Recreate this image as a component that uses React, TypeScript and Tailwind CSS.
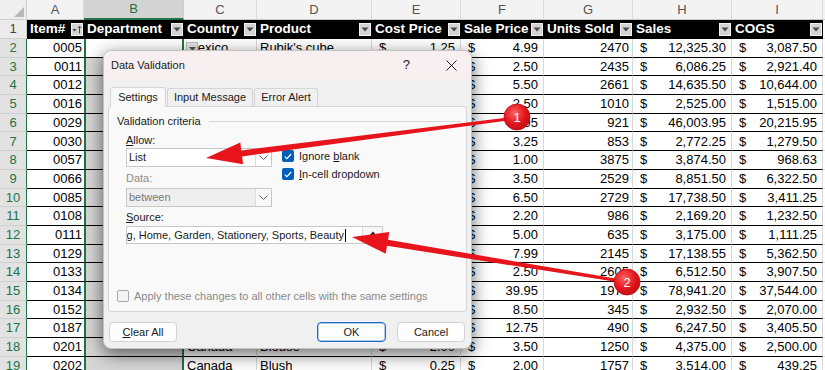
import React from "react";

const W = [
  "w-[27px]",
  "w-[57px]",
  "w-[100px]",
  "w-[73px]",
  "w-[115px]",
  "w-[89px]",
  "w-[83px]",
  "w-[89px]",
  "w-[99px]",
  "w-[91px]",
  "w-[30px]",
];
const LETTERS = ["", "A", "B", "C", "D", "E", "F", "G", "H", "I", "J"];
const HEADERS = ["Item#", "Department", "Country", "Product", "Cost Price", "Sale Price", "Units Sold", "Sales", "COGS"];

const DATA: string[][] = [
  ["0005", "Mexico", "Rubik's cube", "1.25", "4.99", "2470", "12,325.30", "3,087.50"],
  ["0011", "Canada", "Pencil case", "1.20", "2.50", "2435", "6,086.25", "2,921.40"],
  ["0012", "USA", "Garden hose", "4.00", "5.50", "2661", "14,635.50", "10,644.00"],
  ["0016", "Mexico", "Notebook", "1.50", "2.50", "1010", "2,525.00", "1,515.00"],
  ["0029", "USA", "Headphones", "21.95", "49.95", "921", "46,003.95", "20,215.95"],
  ["0030", "Canada", "Sticky notes", "1.50", "3.25", "853", "2,772.25", "1,279.50"],
  ["0057", "USA", "Eraser", "0.25", "1.00", "3875", "3,874.50", "968.63"],
  ["0066", "Mexico", "Plant pot", "2.50", "3.50", "2529", "8,851.50", "6,322.50"],
  ["0085", "Canada", "Socks", "1.25", "6.50", "2729", "17,738.50", "3,411.25"],
  ["0108", "USA", "Lip balm", "1.25", "2.20", "986", "2,169.20", "1,232.50"],
  ["0111", "Mexico", "Tennis balls", "1.75", "5.00", "635", "3,175.00", "1,111.25"],
  ["0129", "Canada", "T-shirt", "2.50", "7.99", "2145", "17,138.55", "5,362.50"],
  ["0133", "USA", "Candle", "1.50", "2.50", "2605", "6,512.50", "3,907.50"],
  ["0134", "Mexico", "Football", "19.00", "39.95", "1976", "78,941.20", "37,544.00"],
  ["0152", "Canada", "Trowel", "6.00", "8.50", "345", "2,932.50", "2,070.00"],
  ["0187", "USA", "Yoga mat", "6.95", "12.75", "490", "6,247.50", "3,405.50"],
  ["0201", "Canada", "Blouse", "2.00", "3.50", "1250", "4,375.00", "2,500.00"],
  ["0202", "Canada", "Blush", "0.25", "2.00", "1757", "3,514.00", "439.25"],
];

function FilterBtn({ sort }: { sort?: boolean }) {
  return (
    <span className="flex h-[13px] w-[12px] shrink-0 items-center justify-center border border-[#f0f0f0] bg-[#d4d4d4]">
      {sort ? (
        <svg width="10" height="11" viewBox="0 0 10 11">
          <path d="M0.5 5h4.2L2.6 7.6z" fill="#444" />
          <path d="M7.5 2.2v7.2M5.9 3.9 7.5 2.2l1.6 1.7" stroke="#444" strokeWidth="1" fill="none" />
        </svg>
      ) : (
        <svg width="8" height="5" viewBox="0 0 8 5">
          <path d="M0.5 0.5h7L4 4.5z" fill="#4a4a4a" />
        </svg>
      )}
    </span>
  );
}

function Acc({ w, v }: { w: string; v: string }) {
  return (
    <div
      className={`${w} flex shrink-0 items-center justify-between whitespace-nowrap border-b border-r border-b-black border-r-[#d8d8d8] bg-white pl-[7px] pr-[5px]`}
    >
      <span>$</span>
      <span>{v}</span>
    </div>
  );
}

function Sheet() {
  return (
    <div className="flex flex-col">
      {/* column letters */}
      <div className="flex h-[19.5px] text-[13px] text-[#555]">
        {LETTERS.map((l, i) =>
          i === 0 ? (
            <div
              key={i}
              className={`${W[i]} flex shrink-0 items-end justify-end border-b border-r border-[#cfcfcf] bg-[#efefef] p-[2px]`}
            >
              <svg width="10" height="10" viewBox="0 0 10 10">
                <path d="M10 0V10H0z" fill="#b8b8b8" />
              </svg>
            </div>
          ) : i === 2 ? (
            <div
              key={i}
              className={`${W[i]} flex shrink-0 items-center justify-center border-b-2 border-r border-b-[#217346] border-r-[#cfcfcf] bg-[#d3d3d3] text-[#217346]`}
            >
              {l}
            </div>
          ) : (
            <div
              key={i}
              className={`${W[i]} flex shrink-0 items-center justify-center border-b border-r border-b-[#c8c8c8] border-r-[#dadada] bg-[#f3f3f3]`}
            >
              {l}
            </div>
          )
        )}
      </div>

      {/* header row */}
      <div className="flex h-[19.5px]">
        <div
          className={`${W[0]} flex shrink-0 items-center justify-center border-b border-r border-[#cfcfcf] bg-[#ebebeb] text-[13px] text-[#444]`}
        >
          1
        </div>
        {HEADERS.map((h, i) => (
          <div
            key={h}
            className={`${W[i + 1]} flex shrink-0 items-center overflow-hidden whitespace-nowrap bg-black pl-[3px] pr-[1px] text-[13.5px] font-bold text-white`}
          >
            <span>{h}</span>
            <span className="ml-auto">
              <FilterBtn sort={i === 0} />
            </span>
          </div>
        ))}
        <div className={`${W[10]} shrink-0 border-b border-[#dadada] bg-white`} />
      </div>

      {/* data rows */}
      {DATA.map((r, idx) => {
        const n = idx + 2;
        return (
          <div key={n} className="flex h-[18.7px] text-[13px] text-black">
            <div
              className={`${W[0]} flex shrink-0 items-center justify-center border-b border-r border-b-[#cfcfcf] border-r-[#217346] bg-[#e2e2e2] text-[#217346]`}
            >
              {n}
            </div>
            <div className={`${W[1]} flex shrink-0 items-center justify-end border-b border-black bg-white pr-[2px]`}>
              {r[0]}
            </div>
            {idx === 0 ? (
              <div className={`${W[2]} shrink-0 border-x-2 border-b border-x-[#217346] border-b-black bg-white`} />
            ) : (
              <div className={`${W[2]} shrink-0 border-x-2 border-b border-x-[#217346] border-b-black bg-[#d6d6d6]`} />
            )}
            <div
              className={`${W[3]} flex shrink-0 items-center overflow-hidden whitespace-nowrap border-b border-r border-b-black border-r-[#d8d8d8] bg-white pl-[3px]`}
            >
              {r[1]}
            </div>
            <div
              className={`${W[4]} flex shrink-0 items-center overflow-hidden whitespace-nowrap border-b border-r border-b-black border-r-[#d8d8d8] bg-white pl-[3px]`}
            >
              {r[2]}
            </div>
            <Acc w={W[5]} v={r[3]} />
            <Acc w={W[6]} v={r[4]} />
            <div
              className={`${W[7]} flex shrink-0 items-center justify-end border-b border-r border-b-black border-r-[#d8d8d8] bg-white pr-[3px]`}
            >
              {r[5]}
            </div>
            <Acc w={W[8]} v={r[6]} />
            <Acc w={W[9]} v={r[7]} />
            <div className={`${W[10]} shrink-0 border-b border-[#dadada] bg-white`} />
          </div>
        );
      })}
    </div>
  );
}

function Chevron() {
  return (
    <svg width="9" height="5" viewBox="0 0 9 5">
      <path d="M0.5 0.5 4.5 4.5 8.5 0.5" stroke="#606060" strokeWidth="1" fill="none" />
    </svg>
  );
}

function Check() {
  return (
    <span className="flex h-[12px] w-[12px] shrink-0 items-center justify-center rounded-[2px] bg-[#005fb8]">
      <svg width="8" height="7" viewBox="0 0 8 7">
        <path d="M0.8 3.6 2.9 5.6 7.2 1" stroke="#fff" strokeWidth="1.2" fill="none" />
      </svg>
    </span>
  );
}

function Dialog() {
  return (
    <div className="absolute left-[103px] top-[50px] flex h-[299px] w-[369px] flex-col overflow-hidden rounded-[8px] border border-[#c2c2c2] bg-[#f0f0f0] text-[11px] text-[#1b1b1b] shadow-[0_5px_18px_rgba(0,0,0,0.6)]">
      {/* title bar */}
      <div className="flex h-[28px] shrink-0 items-center bg-[#f8f0f0] pl-[7px] pr-[14px]">
        <span>Data Validation</span>
        <span className="ml-auto text-[13px]">?</span>
        <svg className="ml-[36px]" width="11" height="11" viewBox="0 0 11 11">
          <path d="M0.5 0.5 10.5 10.5M10.5 0.5 0.5 10.5" stroke="#1b1b1b" strokeWidth="1" />
        </svg>
      </div>

      {/* tabs */}
      <div className="relative z-10 mt-[8px] flex h-[19px] shrink-0 items-end pl-[6px]">
        <div className="-mb-px flex h-[20px] w-[56px] items-center justify-center rounded-t-[3px] border border-b-0 border-[#d5d5d5] bg-[#f9f9f9]">
          Settings
        </div>
        <div className="ml-px flex h-[18px] w-[86px] items-center justify-center rounded-t-[3px] border border-b-0 border-[#d5d5d5] bg-[#f0f0f0]">
          Input Message
        </div>
        <div className="ml-px flex h-[18px] w-[64px] items-center justify-center rounded-t-[3px] border border-b-0 border-[#d5d5d5] bg-[#f0f0f0]">
          Error Alert
        </div>
      </div>

      {/* panel */}
      <div className="mx-[4px] flex h-[206px] shrink-0 flex-col rounded-[3px] border border-[#d5d5d5] bg-[#f9f9f9]">
        <div className="mt-[7px] flex h-[14px] items-center pl-[8px]">
          <span>Validation criteria</span>
          <span className="ml-[8px] mr-[5px] h-px flex-1 bg-[#d6d6d6]" />
        </div>
        <div className="ml-[17px] mt-[5px] flex h-[14px] items-center">
          <span>
            <span className="underline">A</span>llow:
          </span>
        </div>
        <div className="ml-[17px] mt-[1px] flex">
          <div className="flex w-[146px] flex-col">
            <div className="flex h-[19px] items-stretch border border-[#c8c8c8] bg-white">
              <span className="flex flex-1 items-center pl-[2px]">List</span>
              <span className="flex w-[16px] items-center justify-center border-l border-[#dcdcdc]">
                <Chevron />
              </span>
            </div>
            <div className="mt-[4px] flex h-[14px] items-center text-[#8a8a8a]">Data:</div>
            <div className="mt-[3px] flex h-[19px] items-stretch border border-[#c8c8c8] bg-[#efefef] text-[#7a7a7a]">
              <span className="flex flex-1 items-center pl-[2px]">between</span>
              <span className="flex w-[16px] items-center justify-center border-l border-[#dcdcdc] bg-[#f8f8f8]">
                <Chevron />
              </span>
            </div>
          </div>
          <div className="ml-[10px] flex flex-col pt-[2px]">
            <div className="flex h-[12px] items-center gap-[5px]">
              <Check />
              <span>
                Ignore <span className="underline">b</span>lank
              </span>
            </div>
            <div className="mt-[6px] flex h-[12px] items-center gap-[5px]">
              <Check />
              <span>
                <span className="underline">I</span>n-cell dropdown
              </span>
            </div>
          </div>
        </div>
        <div className="ml-[17px] mt-[3px] flex h-[14px] items-center">
          <span>
            <span className="underline">S</span>ource:
          </span>
        </div>
        <div className="ml-[17px] mt-[2px] flex h-[18px] w-[257px] items-stretch border border-[#c8c8c8] bg-white">
          <div className="flex flex-1 items-center justify-end overflow-hidden pr-[16px]">
            <span className="shrink-0 whitespace-nowrap">ng, Home, Garden, Stationery, Sports, Beauty</span>
            <span className="ml-px h-[13px] w-px shrink-0 bg-black" />
          </div>
          <span className="flex w-[20px] items-center justify-center border-l border-[#dcdcdc] bg-[#f6f6f6]">
            <svg width="10" height="10" viewBox="0 0 10 10">
              <path d="M5 1.5 1.8 5h2.2v3.5h2V5h2.2z" fill="#222" />
            </svg>
          </span>
        </div>
        <div className="mb-[9px] mt-auto flex h-[12px] items-center gap-[5px] pl-[8px] text-[#8a8a8a]">
          <span className="h-[12px] w-[12px] shrink-0 rounded-[2px] border border-[#a8a8a8] bg-[#f4f4f4]" />
          <span>Apply these changes to all other cells with the same settings</span>
        </div>
      </div>

      {/* buttons */}
      <div className="mt-[10px] flex px-[5px]">
        <div className="flex h-[20px] w-[68px] items-center justify-center rounded-[4px] border border-[#d2d2d2] bg-[#fdfdfd]">
          <span>
            <span className="underline">C</span>lear All
          </span>
        </div>
        <div className="ml-auto flex h-[20px] w-[69px] items-center justify-center rounded-[4px] border border-[#1e6bc4] bg-[#fdfdfd] shadow-[inset_0_0_0_1px_rgba(30,107,196,0.35)]">
          OK
        </div>
        <div className="ml-[11px] mr-px flex h-[20px] w-[68px] items-center justify-center rounded-[4px] border border-[#d2d2d2] bg-[#fdfdfd]">
          Cancel
        </div>
      </div>
    </div>
  );
}

function Arrows() {
  return (
    <svg
      className="pointer-events-none absolute left-0 top-0"
      width="825"
      height="370"
      viewBox="0 0 825 370"
    >
      <defs>
        <radialGradient id="badge" cx="0.4" cy="0.35" r="0.75">
          <stop offset="0" stopColor="#ff6161" />
          <stop offset="0.55" stopColor="#e3161c" />
          <stop offset="1" stopColor="#b50c10" />
        </radialGradient>
      </defs>
      <polygon
        points="515.8,116.5 241.3,150.4 240.3,142.5 206,158 243.1,164.3 242.1,156.4 516.2,119.5"
        fill="#e8141b"
      />
      <polygon
        points="627.2,280.5 388.0,239.8 389.3,231.9 352,237 385.7,253.7 387.0,245.8 626.8,283.5"
        fill="#e8141b"
      />
      <circle cx="517" cy="117" r="13" fill="url(#badge)" stroke="#c10d12" strokeWidth="0.8" />
      <text
        x="517"
        y="121.5"
        textAnchor="middle"
        fontSize="13"
        fill="#ffffff"
        fontFamily="Liberation Sans, Arial, sans-serif"
      >
        1
      </text>
      <circle cx="627" cy="282" r="13" fill="url(#badge)" stroke="#c10d12" strokeWidth="0.8" />
      <text
        x="627"
        y="286.5"
        textAnchor="middle"
        fontSize="13"
        fill="#ffffff"
        fontFamily="Liberation Sans, Arial, sans-serif"
      >
        2
      </text>
    </svg>
  );
}

export default function App() {
  return (
    <div className="relative h-[370px] w-[825px] overflow-hidden bg-white font-['Liberation_Sans',Arial,sans-serif]">
      <Sheet />
      {/* in-cell dropdown button for B2 */}
      <div className="absolute left-[186px] top-[42px] flex h-[14px] w-[12px] items-center justify-center border border-[#bdbdbd] bg-[#e6e6e6]">
        <svg width="7" height="4" viewBox="0 0 7 4">
          <path d="M0 0h7L3.5 4z" fill="#555" />
        </svg>
      </div>
      <Dialog />
      <Arrows />
    </div>
  );
}
